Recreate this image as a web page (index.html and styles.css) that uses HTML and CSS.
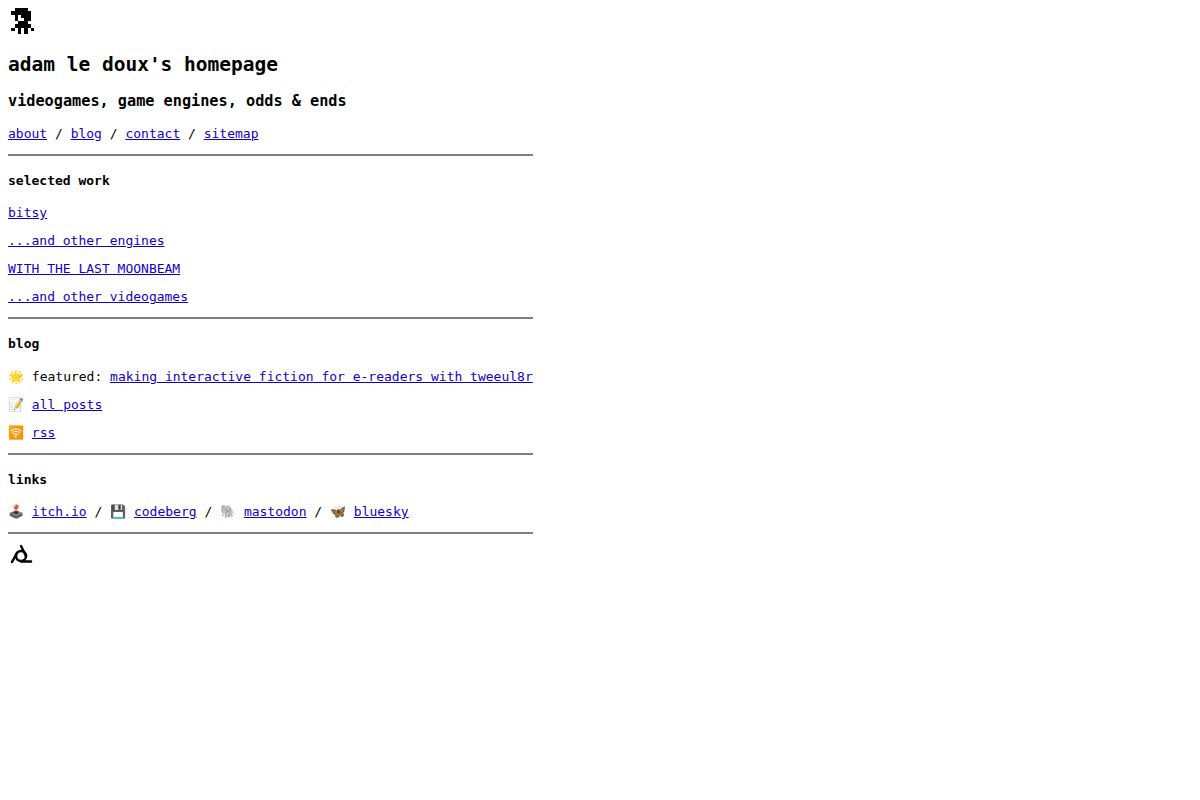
FILE: index.html
```html
<!DOCTYPE html>
<html lang="en">
<head>
  <meta charset="UTF-8">
  <meta name="viewport" content="width=device-width, initial-scale=1.0">
  <title>adam le doux's homepage</title>
  <link rel="stylesheet" href="styles.css">
</head>
<body>
  <main class="page">
    <!-- 8x8 pixel avatar -->
    <svg class="icon" viewBox="0 0 8 8" shape-rendering="crispEdges" role="img" aria-label="avatar">
      <path d="M2 0h4v1h1v3h-1v1h1v1h-1v2h-1v-2h-1v2h-1v-2h-1v-1h1v-1h2v-1h-1v-1h-1v2h-1v-2h-1v-1h1z M1 6h1v1h-1z M7 6h1v1h-1z"/>
    </svg>

    <h2>adam le doux's homepage</h2>
    <h3>videogames, game engines, odds &amp; ends</h3>
    <p><a href="#about">about</a> / <a href="#blog">blog</a> / <a href="#contact">contact</a> / <a href="#sitemap">sitemap</a></p>
    <hr>

    <h4>selected work</h4>
    <p><a href="#bitsy">bitsy</a></p>
    <p><a href="#engines">...and other engines</a></p>
    <p><a href="#moonbeam">WITH THE LAST MOONBEAM</a></p>
    <p><a href="#videogames">...and other videogames</a></p>
    <hr>

    <h4>blog</h4>
    <p>🌟 featured: <a href="#tweeul8r">making interactive fiction for e-readers with tweeul8r</a></p>
    <p>📝 <a href="#posts">all posts</a></p>
    <p>🛜 <a href="#rss">rss</a></p>
    <hr>

    <h4>links</h4>
    <p>🕹️ <a href="#itch">itch.io</a> / 💾 <a href="#codeberg">codeberg</a> / 🐘 <a href="#mastodon">mastodon</a> / 🦋 <a href="#bluesky">bluesky</a></p>
    <hr>

    <svg class="icon mark" viewBox="0 0 52 52" role="img" aria-label="logo">
      <circle cx="26" cy="30" r="10"/>
      <path d="M26 10l10 20M8 42l10-18M26 41h20"/>
    </svg>
  </main>
</body>
</html>
```

FILE: styles.css
```css
body {
  font-family: "DejaVu Sans Mono", monospace;
  font-size: 13px;
  color: black;
  background-color: white;
}

.page {
  width: fit-content;
}

a {
  color: #1100cc;
}

hr {
  border: 1px solid gray;
}

.icon {
  width: 2em;
  height: 2em;
}

.mark {
  fill: none;
  stroke: black;
  stroke-width: 5;
  stroke-linecap: round;
}
```
